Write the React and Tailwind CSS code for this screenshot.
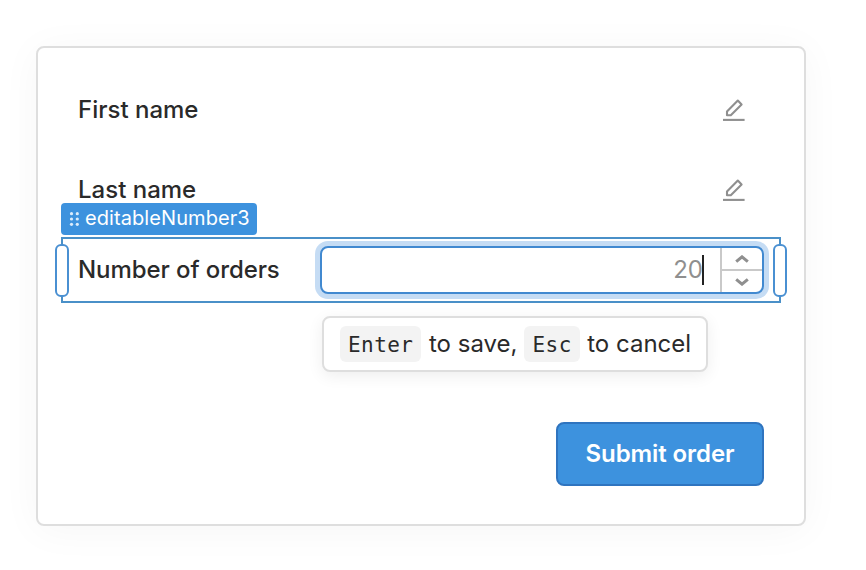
import React from "react";

// icons
const EditIcon = () => (
  <svg
    width="24"
    height="24"
    viewBox="0 0 24 24"
    fill="none"
    stroke="#8f8f8f"
    strokeWidth="2.1"
    className="shrink-0"
  >
    <path d="M5 17.2V13.4L15.8 2.6L19.6 6.4L8.8 17.2Z" strokeLinejoin="round" />
    <path d="M1 21.9H22.6" />
  </svg>
);

const DragDots = () => (
  <svg width="10" height="14" viewBox="0 0 10 14" fill="#dcecfb">
    {[1.7, 7, 12.3].map((y) => (
      <React.Fragment key={y}>
        <circle cx="2.5" cy={y} r="1.6" />
        <circle cx="8.3" cy={y} r="1.6" />
      </React.Fragment>
    ))}
  </svg>
);

const Caret = ({ up }) => (
  <svg
    width="14"
    height="8"
    viewBox="0 0 14 8"
    fill="none"
    stroke="#8f8f8f"
    strokeWidth="3.1"
  >
    <path d={up ? "M1.2 6.6L7 1.9L12.8 6.6" : "M1.2 1.4L7 6.1L12.8 1.4"} />
  </svg>
);

const Field = ({ label }) => (
  <div className="flex h-16 items-center justify-between pr-[34px] pl-4">
    <span>{label}</span>
    <EditIcon />
  </div>
);

const Key = ({ children }) => (
  <kbd className="flex h-9 items-center rounded-md bg-[#f3f3f3] px-2 pt-px font-['DejaVu_Sans_Mono',monospace] text-[21px] tracking-[0.45px]">
    {children}
  </kbd>
);

const App = () => {
  return (
    <div className="h-[570px] w-[866px] overflow-hidden bg-white pt-[46px] pl-9 font-['Inter',sans-serif] text-[24px] leading-8 font-medium text-[#2a2a2a]">
      <div className="flex h-[480px] w-[770px] flex-col gap-4 rounded-lg border-2 border-[#dedede] bg-white px-6 pt-[30px] shadow-[0_4px_40px_rgba(0,0,0,0.04)]">
        <Field label="First name" />
        <Field label="Last name" />

        {/* selected field */}
        <div className="relative -mx-px -mt-px flex h-[66px] items-center border-2 border-[#4a90c8] pl-[15px]">
          <div className="absolute -top-9 -left-0.5 flex h-8 w-[196px] items-center gap-1.5 rounded-[4px] bg-[#3d92de] pl-2 text-[20px] font-normal text-white">
            <DragDots />
            <span className="-mt-0.5 tracking-[0.08px]">editableNumber3</span>
          </div>
          <div className="absolute top-[5px] -left-2 h-[53px] w-3.5 rounded-md border-2 border-[#4a90d2] bg-white" />
          <div className="absolute top-[5px] -right-2 h-[53px] w-3.5 rounded-md border-2 border-[#4a90d2] bg-white" />

          <span className="w-[242px] tracking-[-0.08px]">Number of orders</span>
          <div className="flex h-12 w-[444px] rounded-lg border-2 border-[#4189d0] bg-white shadow-[0_0_0_5px_#c5dcf4]">
            <div className="flex flex-1 items-center justify-end pr-4 font-normal text-[#8f8f8f]">
              <span>20</span>
              <span className="-ml-px h-[30px] w-0.5 bg-[#222]" />
            </div>
            <div className="flex w-[42px] flex-col border-l-2 border-[#c9c9c9]">
              <div className="flex flex-1 items-center justify-center border-b-2 border-[#c9c9c9]">
                <Caret up />
              </div>
              <div className="flex flex-1 items-center justify-center">
                <Caret />
              </div>
            </div>
          </div>
        </div>

        {/* keyboard hint */}
        <div className="-mt-[3px] ml-[260px] flex h-14 w-[386px] shrink-0 items-center rounded-lg border-2 border-[#dedede] bg-white pl-4 font-normal shadow-[0_4px_16px_rgba(0,0,0,0.07)]">
          <Key>Enter</Key>
          <span className="mr-[7px] ml-[7.5px]">to save,</span>
          <Key>Esc</Key>
          <span className="ml-[7.5px]">to cancel</span>
        </div>

        <button className="mt-[34px] mr-4 h-16 w-52 shrink-0 self-end rounded-lg border-2 border-[#2f74bf] bg-[#3d92de] font-semibold tracking-[-0.1px] text-white">
          Submit order
        </button>
      </div>
    </div>
  );
};

export default App;
